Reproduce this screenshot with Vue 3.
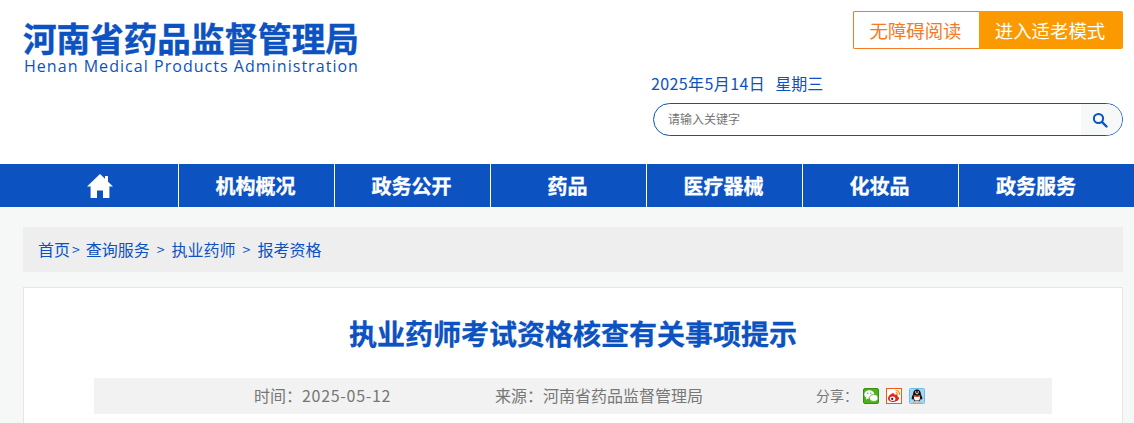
<script setup>
const navItems = ['机构概况', '政务公开', '药品', '医疗器械', '化妆品', '政务服务']
const crumbs = ['查询服务', '执业药师', '报考资格']
</script>

<template>
  <div class="page">
    <header class="top">
      <div class="logo">
        <div class="logo-cn">河南省药品监督管理局</div>
        <div class="logo-en">Henan Medical Products Administration</div>
      </div>
      <div class="tools">
        <div class="modes">
          <a class="mode-a">无障碍阅读</a>
          <a class="mode-b">进入适老模式</a>
        </div>
        <div class="date">
          <span>2025年5月14日</span>
          <span>星期三</span>
        </div>
        <div class="search">
          <span class="placeholder">请输入关键字</span>
          <span class="search-btn">
            <svg width="16" height="16" viewBox="0 0 16 16">
              <circle cx="6.5" cy="6.5" r="4.6" fill="none" stroke="#0c52c1" stroke-width="2" />
              <path d="M10 10l4.5 4.5" stroke="#0c52c1" stroke-width="2.4" stroke-linecap="round" />
            </svg>
          </span>
        </div>
      </div>
    </header>

    <nav class="nav">
      <div class="nav-inner">
        <a class="nav-item">
          <svg width="26" height="24" viewBox="0 0 26 24">
            <path fill="#fff" d="M13 0L0 12.500h3.600V24h6.400v-7.500h6V24h6.400V12.500H26L21 7.700V2h-3v2.800z" />
          </svg>
        </a>
        <a v-for="item in navItems" :key="item" class="nav-item">{{ item }}</a>
      </div>
    </nav>

    <main class="body">
      <div class="crumbs">
        <a>首页</a><span class="sep first">&gt;</span>
        <template v-for="(c, i) in crumbs" :key="c">
          <a>{{ c }}</a><span v-if="i < crumbs.length - 1" class="sep">&gt;</span>
        </template>
      </div>

      <section class="card">
        <h1 class="title">执业药师考试资格核查有关事项提示</h1>
        <div class="meta">
          <span class="time">时间：<span class="num">2025-05-12</span></span>
          <span class="source">来源：河南省药品监督管理局</span>
          <span class="share">分享：</span>
          <span class="icons">
            <svg class="ico" viewBox="0 0 16 16">
              <rect x=".5" y=".5" width="15" height="15" rx="1.500" fill="#4cb01a" stroke="#3a8f12" />
              <ellipse cx="6.300" cy="6.400" rx="5" ry="4.200" fill="#fff" />
              <path d="M3.600 9.500l-.6 2.200 2.400-1.400z" fill="#fff" />
              <ellipse cx="10.800" cy="10" rx="4.200" ry="3.400" fill="#fff" stroke="#4cb01a" stroke-width=".8" />
              <circle cx="4.800" cy="5.200" r=".7" fill="#4cb01a" />
              <circle cx="7.800" cy="5.200" r=".7" fill="#4cb01a" />
            </svg>
            <svg class="ico" viewBox="0 0 16 16">
              <rect x=".5" y=".5" width="15" height="15" fill="#fff" stroke="#ea5a1c" />
              <path d="M2 10.400c0-2.600 3.600-5.600 5.600-5.200 1.200.3.900 1.700.9 1.700s2.300-.8 3 .3c.3.600 0 1.200 0 1.200s1.500.4 1.500 1.900c0 1.700-2.500 3.700-5.700 3.700C4.300 14 2 12.500 2 10.400z" fill="#e2281b" />
              <ellipse cx="6.600" cy="10.800" rx="2.800" ry="2.200" fill="#fff" />
              <circle cx="6.200" cy="10.900" r="1.100" fill="#222" />
              <path d="M9.500 2.500c2.500 0 4.200 1.800 4.200 4.200M9.700 4.600c1.200 0 2 .8 2 2" fill="none" stroke="#f39200" stroke-width="1.200" />
            </svg>
            <svg class="ico" viewBox="0 0 16 16">
              <rect x=".5" y=".5" width="15" height="15" rx="1" fill="#a4d8f5" stroke="#6dbbe9" />
              <path d="M8 1.500c2.500 0 3.800 1.900 3.800 4.100 0 .9 1.900 3.800 1.500 5.500-.3.800-1.100 0-1.600-.7 0 1.200-.6 2-1.200 2.600H5.500c-.6-.6-1.200-1.400-1.200-2.600-.5.700-1.300 1.500-1.600.7-.4-1.700 1.500-4.600 1.500-5.500C4.200 3.400 5.500 1.500 8 1.500z" fill="#111" />
              <path d="M5.500 7.500c1.700.6 3.300.6 5 0 .8 1.800.5 4-.5 5H6c-1-1-1.300-3.200-.5-5z" fill="#fff" />
              <path d="M4.600 7c2.200 1 4.600 1 6.800 0v1.300c-2.200 1-4.600 1-6.800 0z" fill="#e8332a" />
              <ellipse cx="8" cy="5.600" rx="1.500" ry=".8" fill="#f6b21a" />
              <circle cx="6.700" cy="4" r=".7" fill="#fff" />
              <circle cx="9.300" cy="4" r=".7" fill="#fff" />
              <path d="M4 14.500c0-1.100 1.400-1.900 2.900-1.300l-.2 1.300zM12 14.500c0-1.100-1.400-1.900-2.900-1.300l.2 1.300z" fill="#f6a21a" />
            </svg>
          </span>
        </div>
      </section>
    </main>
  </div>
</template>

<style>
html,
body {
  margin: 0;
  background: #fff;
  overflow: hidden;
}
</style>

<style scoped>
.page {
  font-family: "Noto Sans CJK SC", "Open Sans", sans-serif;
  width: 1134px;
  height: 423px;
  overflow: hidden;
  background: #f6f8f8;
}

.top {
  height: 164px;
  background: #fff;
  display: flex;
  justify-content: space-between;
  padding: 11px 11px 0 23px;
  box-sizing: border-box;
}

.logo {
  width: 336px;
  color: #0c52c1;
}
.logo-cn {
  font-size: 33.600px;
  font-weight: 700;
  line-height: 36px;
  margin-top: 9px;
  white-space: nowrap;
  -webkit-text-stroke: 0.4px #0c52c1;
}
.logo-en {
  font-family: "Open Sans", sans-serif;
  font-size: 16px;
  line-height: 20px;
  letter-spacing: 1.040px;
  margin-left: 1px;
  white-space: nowrap;
}

.tools {
  width: 472px;
}

.modes {
  display: flex;
  justify-content: flex-end;
  height: 38px;
  font-size: 18.400px;
  line-height: 38px;
  text-align: center;
}
.mode-a {
  width: 126px;
  box-sizing: border-box;
  padding-right: 2px;
  border: 1px solid #f57a23;
  border-right: 0;
  border-radius: 2px 0 0 2px;
  line-height: 36px;
  color: #f57a23;
  background: #fff;
}
.mode-b {
  width: 144px;
  box-sizing: border-box;
  padding-right: 2px;
  background: #fa9a00;
  color: #fff;
  border-radius: 0 2px 2px 0;
}

.date {
  margin-top: 22px;
  font-size: 16px;
  line-height: 24px;
  color: #0c52c1;
  display: flex;
  gap: 10px;
}
.date span:first-child {
  letter-spacing: 0.400px;
}

.search {
  margin: 8px 0 0 2px;
  height: 33px;
  box-sizing: border-box;
  border: 1px solid #0c52c1;
  border-radius: 17px;
  display: flex;
  justify-content: space-between;
  overflow: hidden;
}
.placeholder {
  padding-left: 14px;
  font-size: 12px;
  line-height: 29px;
  color: #757575;
}
.search-btn {
  width: 41px;
  background: #f7f8f8;
  display: flex;
  align-items: center;
  padding-left: 11px;
  box-sizing: border-box;
}

.nav {
  height: 43px;
  background: #0c52c1;
  padding-left: 23px;
}
.nav-inner {
  display: flex;
}
.nav-item {
  width: 156px;
  height: 43px;
  box-sizing: border-box;
  display: flex;
  align-items: center;
  justify-content: center;
  padding-right: 2px;
  border-right: 1px solid #fff;
  color: #fff;
  font-size: 20px;
  font-weight: 700;
  -webkit-text-stroke: 0.3px #fff;
}
.nav-item:last-child {
  border-right: 0;
}

.body {
  padding: 20px 11px 0 23px;
}

.crumbs {
  height: 45px;
  box-sizing: border-box;
  padding: 0 0 2px 15px;
  background: #eeeeee;
  display: flex;
  align-items: center;
  font-size: 16px;
  color: #0c52c1;
}
.sep {
  margin: 0 7px;
  font-size: 14px;
}
.sep.first {
  margin: 0 6px 0 2px;
}

.card {
  margin-top: 15px;
  background: #fff;
  border: 1px solid #e6e6e6;
  box-sizing: border-box;
  height: 200px;
  padding: 0 70px;
}
.title {
  margin: 0;
  padding-top: 26px;
  height: 90px;
  box-sizing: border-box;
  font-size: 28px;
  line-height: 38px;
  font-weight: 700;
  color: #0c52c1;
  text-align: center;
  -webkit-text-stroke: 0.3px #0c52c1;
}
.meta {
  height: 36px;
  box-sizing: border-box;
  padding: 0 0 2px 160px;
  background: #f2f2f2;
  display: flex;
  align-items: center;
  font-size: 16px;
  color: #777;
}
.num {
  letter-spacing: 0.700px;
}
.time {
  width: 241px;
}
.source {
  width: 320px;
}
.share {
  font-size: 14px;
  margin-left: 1px;
  width: 47px;
}
.icons {
  display: flex;
  gap: 7px;
  margin-top: 2px;
}
.ico {
  width: 16px;
  height: 16px;
}
</style>
